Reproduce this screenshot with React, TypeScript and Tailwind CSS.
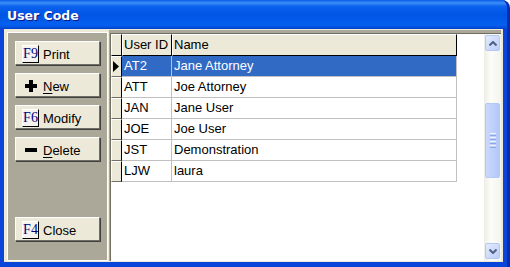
import React from "react"

const users = [
  { id: "AT2", name: "Jane Attorney" },
  { id: "ATT", name: "Joe Attorney" },
  { id: "JAN", name: "Jane User" },
  { id: "JOE", name: "Joe User" },
  { id: "JST", name: "Demonstration" },
  { id: "LJW", name: "laura" },
]

const selectedId = "AT2"

function KeyCap({ k }: { k: string }) {
  return (
    <span className="flex h-[18px] w-[17px] items-center justify-center border border-white border-r-black border-b-black bg-[#f4f3ee] font-['Liberation_Serif',serif] text-[14px] leading-none text-[#000080]">
      {k}
    </span>
  )
}

function PlusIcon() {
  return (
    <svg width="12" height="12" viewBox="0 0 12 12">
      <rect x="0" y="4" width="12" height="4" fill="#000" />
      <rect x="4" y="0" width="4" height="12" fill="#000" />
    </svg>
  )
}

function MinusIcon() {
  return (
    <svg width="12" height="4" viewBox="0 0 12 4">
      <rect x="0" y="0" width="12" height="4" fill="#000" />
    </svg>
  )
}

function PanelButton({ icon, children, className = "" }: { icon: React.ReactNode; children: React.ReactNode; className?: string }) {
  return (
    <button
      className={`flex h-[24px] w-[85px] items-center border border-white border-r-[#716f64] border-b-[#716f64] bg-[#ece9d8] pl-[6px] pt-[2px] shadow-[1px_1px_0_#404040] ${className}`}
    >
      <span className="flex w-[17px] items-center justify-center">{icon}</span>
      <span className="ml-[4px] pt-[2px] text-[13px] text-black">{children}</span>
    </button>
  )
}

function ScrollButton({ dir }: { dir: "up" | "down" }) {
  return (
    <div className="flex h-[16px] w-[15px] items-center justify-center rounded-[2px] border border-[#b4c8f6] bg-[linear-gradient(135deg,#e3ebfe,#bccdf9)]">
      <svg width="8" height="5" viewBox="0 0 8 5">
        {dir === "up" ? (
          <polyline points="0.5,4.5 4,1 7.5,4.5" fill="none" stroke="#4d6185" strokeWidth="2" />
        ) : (
          <polyline points="0.5,0.5 4,4 7.5,0.5" fill="none" stroke="#4d6185" strokeWidth="2" />
        )}
      </svg>
    </div>
  )
}

export default function App() {
  return (
    <div className="h-[267px] w-[510px] bg-white font-['Liberation_Sans',Arial,sans-serif]">
      <div className="flex h-full flex-col rounded-tr-[8px] border-r-[3px] border-[#0a2bb0] bg-[#0845d8]">
        {/* Title bar */}
        <div className="flex h-[29px] items-center rounded-tr-[7px] bg-[linear-gradient(to_bottom,#0a5ce8_0%,#3c8ef7_10%,#0b62ec_22%,#0055e5_50%,#0560f0_86%,#0453e0_93%,#0040c8_100%)] pl-[7px] pt-[3px]">
          <span className="font-['DejaVu_Sans',sans-serif] text-[12.5px] font-bold text-white [text-shadow:1px_1px_#0a1883]">
            User Code
          </span>
        </div>

        <div className="flex flex-1 pb-[5px] pl-[4px] pr-[4px]">
          <div className="flex flex-1 bg-[#ece9d8]">
            {/* Left button panel */}
            <div className="mb-[1px] ml-[3px] mt-[3px] flex w-[101px] flex-col border border-white bg-[#aca899] pb-[19px] pl-[7px] pt-[8px]">
              <div className="flex flex-col gap-[8px]">
                <PanelButton icon={<KeyCap k="F9" />}>Print</PanelButton>
                <PanelButton icon={<PlusIcon />}>
                  <span className="underline underline-offset-2">N</span>ew
                </PanelButton>
                <PanelButton icon={<KeyCap k="F6" />}>Modify</PanelButton>
                <PanelButton icon={<MinusIcon />}>
                  <span className="underline underline-offset-2">D</span>elete
                </PanelButton>
              </div>
              <PanelButton icon={<KeyCap k="F4" />} className="mt-auto">
                Close
              </PanelButton>
            </div>

            {/* Grid */}
            <div className="mb-[1px] ml-[1px] mr-[2px] mt-[1px] flex flex-1 border-l border-t-[3px] border-[#aca899]">
              <div className="flex flex-1 border-l border-t border-[#716f64] bg-white">
                <div className="flex-1 text-[13px]">
                  <div className="flex h-[22px]">
                    <div className="w-[11px] border border-white border-r-black border-b-black bg-[#ece9d8]" />
                    <div className="flex w-[50px] items-center border border-white border-r-black border-b-black bg-[#ece9d8] pl-[1px] text-black">
                      User ID
                    </div>
                    <div className="flex w-[285px] items-center border border-white border-r-black border-b-black bg-[#ece9d8] pl-[1px] text-black">
                      Name
                    </div>
                  </div>
                  {users.map((u) => {
                    const sel = u.id === selectedId
                    return (
                      <div key={u.id} className="flex h-[21px]">
                        <div className="flex w-[11px] items-center border border-white border-r-black border-b-[#716f64] bg-[#ece9d8]">
                          {sel && (
                            <svg width="7" height="11" viewBox="0 0 7 11" className="ml-[1px]">
                              <polygon points="0,0 6,5.5 0,11" fill="#000" />
                            </svg>
                          )}
                        </div>
                        <div
                          className={`flex w-[50px] items-center border-r border-b border-[#c0c0c0] pl-[2px] ${sel ? "bg-[#316ac5] text-white" : "text-black"}`}
                        >
                          {u.id}
                        </div>
                        <div
                          className={`flex w-[285px] items-center border-r border-b border-[#c0c0c0] pl-[2px] ${sel ? "bg-[#316ac5] text-white" : "text-black"}`}
                        >
                          {u.name}
                        </div>
                      </div>
                    )
                  })}
                </div>

                {/* Scrollbar */}
                <div className="flex w-[17px] flex-col items-center bg-[linear-gradient(to_right,#eeede5,#fcfcf9_40%,#f5f4ee)] pb-[2px] pt-[1px]">
                  <ScrollButton dir="up" />
                  <div className="mt-[52px] flex h-[75px] w-[15px] flex-col items-center justify-center gap-[1px] rounded-[2px] border border-[#b4c8f6] bg-[linear-gradient(to_right,#c9d8fd,#bdcffb_60%,#b3c6f6)]">
                    <div className="h-px w-[6px] bg-[#eef3ff]" />
                    <div className="h-px w-[6px] bg-[#8ca6e8]" />
                    <div className="h-px w-[6px] bg-[#eef3ff]" />
                    <div className="h-px w-[6px] bg-[#8ca6e8]" />
                    <div className="h-px w-[6px] bg-[#eef3ff]" />
                    <div className="h-px w-[6px] bg-[#8ca6e8]" />
                    <div className="h-px w-[6px] bg-[#eef3ff]" />
                    <div className="h-px w-[6px] bg-[#8ca6e8]" />
                  </div>
                  <div className="mt-auto">
                    <ScrollButton dir="down" />
                  </div>
                </div>
              </div>
            </div>
          </div>
        </div>
      </div>
    </div>
  )
}
